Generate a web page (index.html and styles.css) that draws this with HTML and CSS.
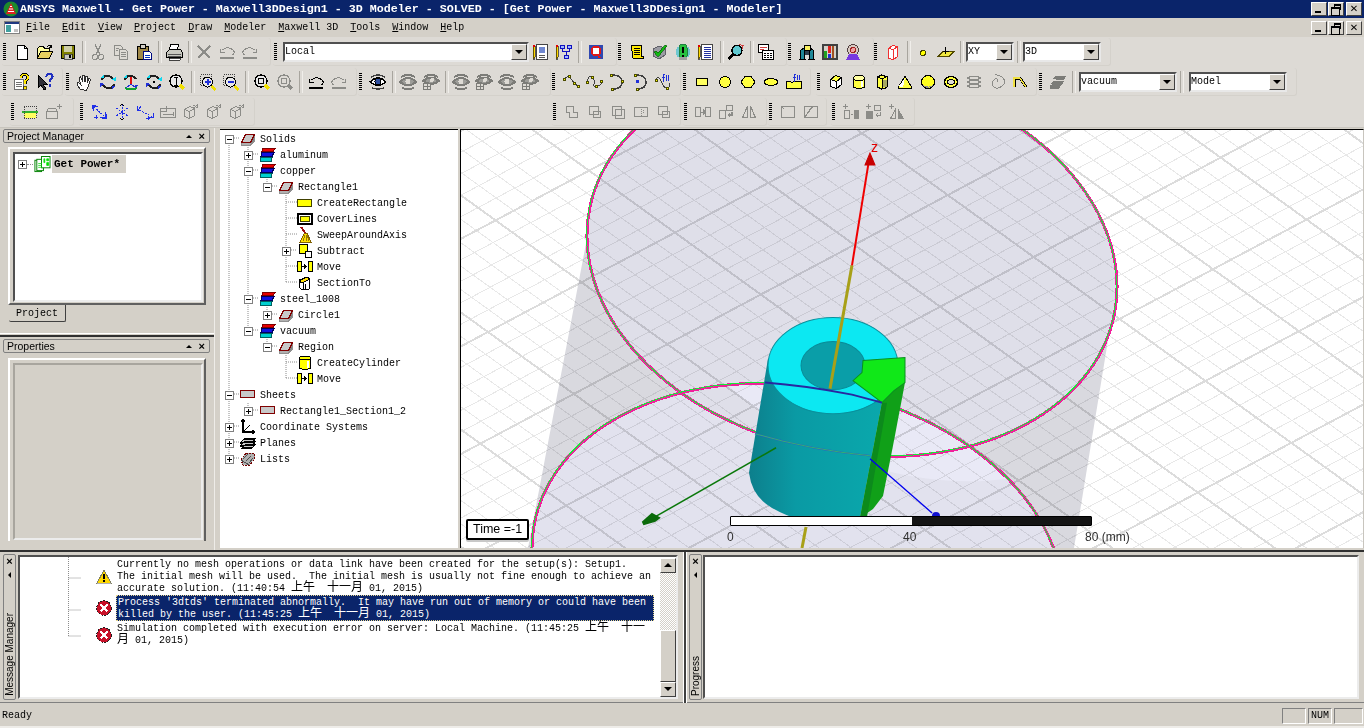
FILE: index.html
```html
<!DOCTYPE html>
<html lang="en">
<head>
<meta charset="utf-8">
<title>ANSYS Maxwell</title>
<link rel="stylesheet" href="styles.css">
</head>
<body>
<svg class="sprite" aria-hidden="true">
<!-- file toolbar -->
<symbol id="new" viewBox="0 0 18 18"><path d="M4.500 2.500h7l3 3v11h-10z" fill="#fff" stroke="#000"/><path d="M11.500 2.500v3h3" fill="none" stroke="#000"/></symbol>
<symbol id="open" viewBox="0 0 18 18"><path d="M1.500 15.500v-10l2-2h4l1 2h5v3" fill="#ffffa0" stroke="#000"/><path d="M1.500 15.500l3-7h12l-3 7z" fill="#e8d060" stroke="#000"/><path d="M10.500 4.500q2-3 5-1M15.500 1.500v3h-3" fill="none" stroke="#000"/></symbol>
<symbol id="save" viewBox="0 0 18 18"><rect x="2.500" y="2.500" width="13" height="13" fill="#808000" stroke="#000"/><rect x="5" y="3" width="8" height="6" fill="#cfcfa8"/><rect x="5" y="11" width="8" height="5" fill="#c8c8c0" stroke="#000" stroke-width=".6"/><rect x="10" y="12" width="2" height="3" fill="#000"/></symbol>
<symbol id="cut" viewBox="0 0 18 18"><g fill="none" stroke="#8c8c88"><path d="M6 1.500l5 10M12 1.500l-5 10"/><circle cx="6" cy="14" r="2.500"/><circle cx="12" cy="14" r="2.500"/></g></symbol>
<symbol id="copy" viewBox="0 0 18 18"><g fill="#dedbd5" stroke="#8c8c88"><path d="M2.500 2.500h6l2 2v8h-8z"/><path d="M7.500 6.500h6l2 2v8h-8z"/><path d="M9 9h5M9 11h5M9 13h5M4 5h3M4 7h2"/></g></symbol>
<symbol id="paste" viewBox="0 0 18 18"><rect x="2.500" y="3.500" width="11" height="13" fill="#a08848" stroke="#000"/><rect x="5.500" y="1.500" width="5" height="4" fill="#d4d0c8" stroke="#000"/><path d="M8.500 8.500h6l2 2v6h-8z" fill="#fff" stroke="#000a80"/><path d="M10 12h5M10 14h5" stroke="#0030c0"/></symbol>
<symbol id="print" viewBox="0 0 18 18"><path d="M5.500 1.500h8l-1 6h-8z" fill="#fff" stroke="#000"/><path d="M1.500 9.500l3-3h11l2 3v5h-16z" fill="#c8c8c0" stroke="#000"/><path d="M3 11h13M3 13h13" stroke="#555"/><path d="M4 15h11v2h-11z" fill="#fff" stroke="#000" stroke-width=".7"/></symbol>
<symbol id="del" viewBox="0 0 18 18"><path d="M3 3l12 12M15 3l-12 12" stroke="#8c8c88" stroke-width="2"/></symbol>
<symbol id="undog" viewBox="0 0 18 18"><g fill="none" stroke="#8c8c88"><path d="M4.500 7q4-4 9-1t1 6"/><path d="M2.500 5.500v4h4"/><path d="M2 14.500h14" stroke-width="2"/></g></symbol>
<symbol id="redog" viewBox="0 0 18 18"><g fill="none" stroke="#8c8c88"><path d="M13.500 7q-4-4-9-1t-1 6"/><path d="M15.500 5.500v4h-4"/><path d="M2 14.500h14" stroke-width="2"/></g></symbol>
<symbol id="undo" viewBox="0 0 18 18"><g fill="none" stroke="#000"><path d="M4.500 7q4-4 9-1t1 6"/><path d="M2.500 5.500v4h4"/><path d="M2 14.500h14" stroke-width="2"/></g></symbol>
<!-- project toolbar -->
<symbol id="pdoc" viewBox="0 0 18 18"><path d="M1 3h2v11l-1 3-1-3z" fill="#ffd800" stroke="#000" stroke-width=".6"/><path d="M1 2h2v1.500h-2z" fill="#e00000"/><rect x="4.500" y="1.500" width="11" height="15" fill="#fff" stroke="#444"/><rect x="7" y="4" width="6" height="6" fill="#7088d0"/><path d="M7 12h6M7 14h6" stroke="#555"/></symbol>
<symbol id="ptree" viewBox="0 0 18 18"><path d="M1 3h2v11l-1 3-1-3z" fill="#ffd800" stroke="#000" stroke-width=".6"/><path d="M1 2h2v1.500h-2z" fill="#e00000"/><g fill="#a0b8ff" stroke="#1010c0"><rect x="5.500" y="2.500" width="4" height="3"/><rect x="12.500" y="2.500" width="4" height="3"/><rect x="9.500" y="12.500" width="4" height="3"/></g><path d="M7.500 5.500v3h7v-3M11.500 8.500v4" fill="none" stroke="#1010c0"/></symbol>
<symbol id="qbox" viewBox="0 0 18 18"><rect x="2" y="2" width="14" height="14" fill="#3048b0"/><circle cx="9" cy="8" r="4.500" fill="#fff" stroke="#e01818" stroke-width="2"/><path d="M10 11l3 4" stroke="#e01818" stroke-width="2"/></symbol>
<symbol id="scroll" viewBox="0 0 18 18"><path d="M3.500 2.500h10v11h2v2h-10q-2-1-1-3z" fill="#ffe800" stroke="#000"/><path d="M6 5h6M6 7h6M6 9h6M6 11h6" stroke="#000"/></symbol>
<symbol id="check" viewBox="0 0 18 18"><path d="M2 6l6-3 6 2v7l-6 4-6-3z" fill="#9c9ca4" stroke="#606068"/><path d="M3 9l4 5 9-11-2-1-7 8-2-2z" fill="#14b814" stroke="#086008" stroke-width=".7"/></symbol>
<symbol id="valid" viewBox="0 0 18 18"><rect x="2" y="3" width="14" height="12" rx="5" fill="#70c8d0"/><rect x="5" y="1" width="8" height="16" rx="4" fill="#28c040" stroke="#208040"/><path d="M9 3.500v6.500" stroke="#000" stroke-width="2"/><circle cx="9" cy="13" r="1.300" fill="#000"/><rect x="5" y="14" width="8" height="3" fill="#a0a0a0"/></symbol>
<symbol id="plist" viewBox="0 0 18 18"><path d="M1 3h2v11l-1 3-1-3z" fill="#ffd800" stroke="#000" stroke-width=".6"/><path d="M1 2h2v1.500h-2z" fill="#e00000"/><rect x="4.500" y="1.500" width="11" height="15" fill="#fff" stroke="#444"/><path d="M7 4h7M7 6h7M7 8h7M7 10h7M7 12h7M7 14h7" stroke="#2030a0"/></symbol>
<symbol id="mag" viewBox="0 0 18 18"><circle cx="10" cy="7.500" r="5" fill="#60c8d0" stroke="#000" stroke-width="1.400"/><path d="M6.500 11l-5 5" stroke="#000" stroke-width="2.400"/><path d="M12 1.500l4 1-1 3" fill="none" stroke="#d04040"/></symbol>
<symbol id="table" viewBox="0 0 18 18"><rect x="1.500" y="1.500" width="10" height="8" fill="#fff" stroke="#000"/><path d="M3 4h7M3 6h4" stroke="#d04040"/><rect x="5.500" y="7.500" width="11" height="9" fill="#fff" stroke="#000"/><path d="M7 10h8M7 12h8M7 14h8" stroke="#000" stroke-dasharray="2 1"/></symbol>
<symbol id="binoc" viewBox="0 0 18 18"><path d="M2 16l1-9 3-2 1 11z" fill="#208898" stroke="#000"/><path d="M11 16l1-11 3 2 1 9z" fill="#208898" stroke="#000"/><path d="M6 2h6v5h-6z" fill="#f8f060" stroke="#000"/><path d="M7 8h4v4h-4z" fill="#304050"/></symbol>
<symbol id="bars" viewBox="0 0 18 18"><rect x="2" y="2" width="14" height="14" fill="#d4d0c8" stroke="#404040" stroke-width="2"/><rect x="3" y="8" width="3" height="7" fill="#20a020"/><rect x="7" y="3" width="3" height="7" fill="#e02020"/><rect x="7" y="11" width="3" height="4" fill="#2030d0"/><rect x="11" y="3" width="2" height="12" fill="#a05020"/></symbol>
<symbol id="target" viewBox="0 0 18 18"><circle cx="9" cy="7" r="5.500" fill="#d8c8c0" stroke="#504040"/><circle cx="9" cy="7" r="2.500" fill="#f0a0a0" stroke="#a02020"/><path d="M2 17l3-6h8l3 6z" fill="#7838e0"/></symbol>
<symbol id="redbox" viewBox="0 0 18 18"><path d="M4.500 5.500l4-3 5 1v10l-4 3-5-1z" fill="#fff" stroke="#f03030"/><path d="M4.500 5.500l5 1 4-3M9.500 6.500v10" fill="none" stroke="#f03030"/></symbol>
<symbol id="pt" viewBox="0 0 18 18"><circle cx="9" cy="10" r="2.500" fill="#ffff00" stroke="#404000"/></symbol>
<symbol id="plane" viewBox="0 0 18 18"><path d="M1 13.500l5-5h11l-5 5z" fill="#f0e840" stroke="#504800"/><path d="M8.500 4v7M5.500 8h6" stroke="#000"/></symbol>
<!-- view toolbar -->
<symbol id="help" viewBox="0 0 18 18"><path d="M1.500 6.500h9v10h-9z" fill="#fff" stroke="#707070"/><path d="M3 9h6M3 11h6M3 13h6" stroke="#707070"/><path d="M8 5q0-3.500 3.500-3.500t3.500 3q0 2-3 3.500v3" fill="none" stroke="#000" stroke-width="3"/><path d="M8 5q0-3.500 3.500-3.500t3.500 3q0 2-3 3.500v3" fill="none" stroke="#ffe800" stroke-width="1.600"/><rect x="10.500" y="13" width="3" height="3" fill="#ffe800" stroke="#000" stroke-width=".6"/></symbol>
<symbol id="ahelp" viewBox="0 0 18 18"><path d="M2 2v13l3-3 3 5 2-1-3-5h4z" fill="#303038" stroke="#000"/><path d="M10 4q1-3 3.500-3t3 2.500q0 2-3 3.500v2" fill="none" stroke="#2030c0" stroke-width="2"/><rect x="12.500" y="11" width="2.500" height="2.500" fill="#2030c0"/></symbol>
<symbol id="hand" viewBox="0 0 18 18"><path d="M4 16q-3-4-3-6l1-1 3 3-2-7 1.500-1 2.500 5-1-7h2l1 7 1-6 1.500 .5-.5 6 2-4 1.500 1-2 6-2 5z" fill="#fff" stroke="#303030"/></symbol>
<symbol id="rot" viewBox="0 0 18 18"><path d="M3 7q1-5 7-4 3 .5 4 3M15 11q-1 5-7 4-3-.5-4-3" fill="none" stroke="#202020" stroke-width="2"/><path d="M12 7l5-3v4z" fill="#10d8f0"/><path d="M6 11l-5 3v-4z" fill="#2030d8"/><path d="M17 13l-4 3v-3z" fill="#2030d8"/><path d="M1 5l4-3v3z" fill="#10d8f0"/></symbol>
<symbol id="rot2" viewBox="0 0 18 18"><path d="M3 7q1-5 7-4 3 .5 4 3" fill="none" stroke="#202020" stroke-width="2"/><path d="M3 15q6 3 12 0" fill="none" stroke="#10a030" stroke-width="2"/><path d="M9 4v7" stroke="#e01010" stroke-width="1.500"/><path d="M9 11l-5 4M9 11l5 4" stroke="#2030d8"/><path d="M1 5l4-3v3z" fill="#10d8f0"/><path d="M17 12l-4 3v-3z" fill="#2030d8"/></symbol>
<symbol id="rot3" viewBox="0 0 18 18"><use href="#rot"/><circle cx="9" cy="9" r="1.500" fill="#000"/></symbol>
<symbol id="fit" viewBox="0 0 18 18"><circle cx="8" cy="8" r="6" fill="#e8e8e8" stroke="#000" stroke-width="1.300"/><path d="M8 4v8M6 4h4M6 12h4" stroke="#000"/><path d="M12 12l4 4" stroke="#f0e000" stroke-width="3"/></symbol>
<symbol id="zin" viewBox="0 0 18 18"><rect x="1.500" y="1.500" width="11" height="11" fill="none" stroke="#404040" stroke-dasharray="1 1"/><circle cx="8.500" cy="9" r="5" fill="#e8e8e8" stroke="#000"/><path d="M8.500 6v6M5.500 9h6" stroke="#2030d8" stroke-width="2"/><path d="M12.500 13l4 4" stroke="#f0e000" stroke-width="2.500"/></symbol>
<symbol id="zout" viewBox="0 0 18 18"><rect x="1.500" y="1.500" width="11" height="11" fill="none" stroke="#404040" stroke-dasharray="1 1"/><circle cx="8.500" cy="9" r="5" fill="#e8e8e8" stroke="#000"/><path d="M5.500 9h6" stroke="#2030d8" stroke-width="2"/><path d="M12.500 13l4 4" stroke="#f0e000" stroke-width="2.500"/></symbol>
<symbol id="zall" viewBox="0 0 18 18"><circle cx="8" cy="8" r="6" fill="#e8e8e8" stroke="#000" stroke-width="1.300"/><rect x="5.500" y="5.500" width="5" height="5" fill="none" stroke="#000"/><path d="M12 12l4 4" stroke="#f0e000" stroke-width="3"/></symbol>
<symbol id="zsel" viewBox="0 0 18 18"><circle cx="8" cy="8" r="6" fill="none" stroke="#8c8c88" stroke-width="1.300"/><rect x="5.500" y="5.500" width="5" height="5" fill="none" stroke="#8c8c88"/><path d="M12 12l4 4" stroke="#8c8c88" stroke-width="3"/></symbol>
<symbol id="eye" viewBox="0 0 18 18"><path d="M1 9q8-8 16 0-8 7-16 0z" fill="#fff" stroke="#000" stroke-width="1.400"/><circle cx="9" cy="8.500" r="3" fill="#3050a0" stroke="#000"/><path d="M2 4q7-4 14 0M3 15q6 2 12 0" fill="none" stroke="#404040" stroke-width="1.400"/></symbol>
<symbol id="eyeg" viewBox="0 0 18 18"><path d="M1 9q8-8 16 0-8 7-16 0z" fill="#9c9c98" stroke="#7c7c78" stroke-width="2"/><circle cx="9" cy="8.500" r="2.500" fill="#dedbd5"/><path d="M2 4q7-4 14 0M3 15q6 2 12 0" fill="none" stroke="#7c7c78" stroke-width="2"/></symbol>
<symbol id="eyeb" viewBox="0 0 18 18"><path d="M1 8q8-7 16 0-8 6-16 0z" fill="#9c9c98" stroke="#7c7c78" stroke-width="2"/><circle cx="10" cy="7" r="2" fill="#dedbd5"/><path d="M2 4q7-4 14 0" fill="none" stroke="#7c7c78" stroke-width="2"/><rect x="1.500" y="10.500" width="7" height="6" fill="#dedbd5" stroke="#7c7c78"/><path d="M5 10v6M2 13h6" stroke="#7c7c78"/></symbol>
<!-- draw toolbar -->
<symbol id="pline" viewBox="0 0 18 18"><path d="M2 6l5-3 5 7 4 3" fill="none" stroke="#404040"/><g fill="#ffff00" stroke="#000" stroke-width=".7"><rect x="1" y="5" width="2.500" height="2.500"/><rect x="6" y="2" width="2.500" height="2.500"/><rect x="11" y="9" width="2.500" height="2.500"/><rect x="15" y="12" width="2.500" height="2.500"/></g></symbol>
<symbol id="spl" viewBox="0 0 18 18"><path d="M2 9q2-8 5-5t2 7 4 2 3-5" fill="none" stroke="#404040"/><g fill="#ffff00" stroke="#000" stroke-width=".7"><rect x="1" y="8" width="2.500" height="2.500"/><rect x="6" y="3" width="2.500" height="2.500"/><rect x="10" y="12" width="2.500" height="2.500"/><rect x="15" y="7" width="2.500" height="2.500"/></g></symbol>
<symbol id="arc" viewBox="0 0 18 18"><path d="M4 2q10 0 10 7t-9 7" fill="none" stroke="#404040" stroke-width="1.600"/><g fill="#ffff00" stroke="#000" stroke-width=".7"><rect x="2" y="1" width="2.500" height="2.500"/><rect x="13" y="7" width="2.500" height="2.500"/><rect x="3" y="15" width="2.500" height="2.500"/></g></symbol>
<symbol id="arc2" viewBox="0 0 18 18"><path d="M5 2q10 0 10 7t-9 7" fill="none" stroke="#404040" stroke-width="1.600"/><rect x="3" y="1" width="2.500" height="2.500" fill="#ffff00" stroke="#000" stroke-width=".7"/><rect x="5" y="15" width="2.500" height="2.500" fill="#ffff00" stroke="#000" stroke-width=".7"/><rect x="5" y="7" width="2.500" height="2.500" fill="#2030d8"/></symbol>
<symbol id="eqc" viewBox="0 0 18 18"><path d="M1 7q3-4 5-1t3 6 4 3 2-5" fill="none" stroke="#404040"/><rect x="1" y="6" width="2.500" height="2.500" fill="#ffff00" stroke="#000" stroke-width=".7"/><rect x="12" y="14" width="2.500" height="2.500" fill="#ffff00" stroke="#000" stroke-width=".7"/><path d="M11 1q-2 0-1.500 4t0 4M8 4h3M12 2q1.500 3 0 6M15 2q-1.500 3 0 6" fill="none" stroke="#2030d8"/></symbol>
<symbol id="rect" viewBox="0 0 18 18"><rect x="3.500" y="5.500" width="11" height="7" fill="#ffff60" stroke="#000"/></symbol>
<symbol id="circ" viewBox="0 0 18 18"><circle cx="9" cy="9" r="5.500" fill="#ffff40" stroke="#000"/></symbol>
<symbol id="hexa" viewBox="0 0 18 18"><path d="M6 3.500h6l4 5.500-4 5.500h-6l-4-5.500z" fill="#ffff40" stroke="#000"/></symbol>
<symbol id="elli" viewBox="0 0 18 18"><ellipse cx="9" cy="9" rx="7" ry="3.500" fill="#ffff40" stroke="#000"/></symbol>
<symbol id="eqs" viewBox="0 0 18 18"><path d="M1.500 8.500h4q1 2 3 0h8v7h-15z" fill="#ffff40" stroke="#000"/><path d="M11 1q-2 0-1.500 4t0 3M8 4h3M12 2q1.500 3 0 5M15 2q-1.500 3 0 5" fill="none" stroke="#2030d8"/></symbol>
<symbol id="box" viewBox="0 0 18 18"><path d="M3.500 6.500l5-4 6 2v7l-5 4-6-2z" fill="#fff" stroke="#000"/><path d="M3.500 6.500l6 2 5-4-6-2z" fill="#ffff40" stroke="#000"/><path d="M9.500 8.500v7" stroke="#000"/></symbol>
<symbol id="cyl" viewBox="0 0 18 18"><path d="M3.500 5v9q5.500 3 11 0v-9z" fill="#ffff40" stroke="#000"/><ellipse cx="9" cy="5" rx="5.500" ry="2.500" fill="#ffffa0" stroke="#000"/><rect x="11" y="8" width="2" height="6" fill="#fff"/></symbol>
<symbol id="prism" viewBox="0 0 18 18"><path d="M4.500 4v10l4 2 4-1 2-2v-9l-6-2z" fill="#ffff40" stroke="#000"/><path d="M4.500 4l5 2 5-3" fill="none" stroke="#000"/><path d="M9.500 6v10" stroke="#000"/><rect x="10" y="7" width="4" height="7" fill="#a8a860"/></symbol>
<symbol id="cone" viewBox="0 0 18 18"><path d="M9 3l7 12q-7 2-14 0z" fill="#ffff40" stroke="#000"/><path d="M9 5l-2 9q-3 0-4-1z" fill="#fff"/></symbol>
<symbol id="sph" viewBox="0 0 18 18"><circle cx="9" cy="9" r="6.500" fill="#ffff20" stroke="#000"/><path d="M3 12q4 5 11 1l1-3q-2 6-12 2z" fill="#909090"/></symbol>
<symbol id="tor" viewBox="0 0 18 18"><ellipse cx="9" cy="9" rx="6.500" ry="5.500" fill="#ffff40" stroke="#000" stroke-width="1.400"/><ellipse cx="9" cy="9" rx="3.500" ry="2.500" fill="#dedbd5" stroke="#000"/></symbol>
<symbol id="hel" viewBox="0 0 18 18"><g fill="none" stroke="#8c8c88" stroke-width="1.500"><ellipse cx="9" cy="5" rx="6" ry="1.500"/><ellipse cx="9" cy="9" rx="6" ry="1.500"/><ellipse cx="9" cy="13" rx="6" ry="1.500"/></g></symbol>
<symbol id="spi" viewBox="0 0 18 18"><path d="M9 9q2-2 0-3t-4 2 1 6 8-1 1-8-8-3" fill="none" stroke="#8c8c88"/></symbol>
<symbol id="bond" viewBox="0 0 18 18"><path d="M3 14v-9h6l6 9" fill="none" stroke="#000" stroke-width="3"/><path d="M3 14v-9h6l6 9" fill="none" stroke="#f0e040" stroke-width="1.400"/></symbol>
<symbol id="stack" viewBox="0 0 18 18"><path d="M3 6l3-3h11l-2 4h-5zM1 11l3-3h11l-2 4h-8zM1 12h11l-2 4h-9z" fill="#7c7c78"/></symbol>
<!-- bottom toolbar -->
<symbol id="cs" viewBox="0 0 18 18"><rect x="3" y="9" width="12" height="6" fill="#ffff60"/><path d="M1 9h16" stroke="#30b030" stroke-width="1.400"/><path d="M3 9v-6h12v6M3 15h12M3 15v-6M15 15v-6" fill="none" stroke="#404040" stroke-dasharray="1 1"/></symbol>
<symbol id="csadd" viewBox="0 0 18 18"><path d="M2.500 8.500h11v7h-11zM2.500 8.500l2-3h7l2 3" fill="none" stroke="#8c8c88"/><path d="M15 1v5M12.500 3.500h5" stroke="#8c8c88"/></symbol>
<symbol id="ax1" viewBox="0 0 18 18"><path d="M4 4l10 9" stroke="#2030e8" stroke-dasharray="2 1" fill="none"/><path d="M2 6V2h4M3 2v6M2 3h6M16 11v4h-4M15 15v-6M16 14h-6M6 12v4M4 14h4" fill="none" stroke="#2030e8"/></symbol>
<symbol id="ax2" viewBox="0 0 18 18"><path d="M9 1v16M3 5l12 8M15 5L3 13" stroke="#2030e8" fill="none" stroke-dasharray="2 1"/><path d="M7 3l2-2 2 2M7 15l2 2 2-2" fill="none" stroke="#000"/></symbol>
<symbol id="ax3" viewBox="0 0 18 18"><path d="M1 6l16 8" stroke="#2030e8" stroke-dasharray="2 1" fill="none"/><path d="M1 3v4h4M3 6l2-3M17 10v4h-4M10 15h4M12 13v4" fill="none" stroke="#2030e8"/></symbol>
<symbol id="ax4" viewBox="0 0 18 18"><g fill="none" stroke="#8c8c88"><rect x="1.500" y="5.500" width="15" height="9"/><path d="M7.500 2.500v6h-6M4 11h10M14 9v4"/></g></symbol>
<symbol id="ax5" viewBox="0 0 18 18"><g fill="none" stroke="#8c8c88"><path d="M2.500 6.500l5-3 5 2v7l-5 3-5-2zM2.500 6.500l5 2 5-3M7.500 8.500v7"/><path d="M11 2l5 3M16 2l-5 3M15 1v3"/></g></symbol>
<symbol id="b1" viewBox="0 0 18 18"><path d="M3.500 3.500h7v6h4v5h-8v-5h-3z" fill="none" stroke="#8c8c88" stroke-width="1.300"/></symbol>
<symbol id="b2" viewBox="0 0 18 18"><g fill="none" stroke="#8c8c88" stroke-width="1.300"><rect x="3.500" y="3.500" width="9" height="8"/><rect x="7.500" y="8.500" width="7" height="6"/></g></symbol>
<symbol id="b3" viewBox="0 0 18 18"><g fill="none" stroke="#8c8c88" stroke-width="1.300"><rect x="3.500" y="3.500" width="9" height="9"/><rect x="6.500" y="6.500" width="9" height="9"/></g></symbol>
<symbol id="b4" viewBox="0 0 18 18"><rect x="2.500" y="4.500" width="13" height="9" fill="none" stroke="#8c8c88" stroke-width="1.300"/><path d="M9 4v10M11 7v4" stroke="#8c8c88" stroke-dasharray="1 1"/></symbol>
<symbol id="b6" viewBox="0 0 18 18"><g fill="none" stroke="#8c8c88" stroke-width="1.300"><rect x="1.500" y="4.500" width="5" height="9"/><rect x="11.500" y="4.500" width="5" height="9"/></g><path d="M7 9h3" stroke="#8c8c88"/><path d="M9 6v6l3-3z" fill="#8c8c88"/></symbol>
<symbol id="b7" viewBox="0 0 18 18"><g fill="none" stroke="#8c8c88" stroke-width="1.300"><rect x="2.500" y="7.500" width="6" height="8"/><rect x="9.500" y="2.500" width="6" height="5"/><path d="M15 9v3h-4M13 10l-2 2 2 2"/></g></symbol>
<symbol id="b8" viewBox="0 0 18 18"><g fill="none" stroke="#8c8c88" stroke-width="1.200"><path d="M7.500 3.500v11h-5zM10.500 3.500v11h5z"/></g></symbol>
<symbol id="b9" viewBox="0 0 18 18"><g fill="none" stroke="#8c8c88" stroke-width="1.300"><rect x="2.500" y="3.500" width="13" height="11"/><path d="M2.500 3.500l3 3"/></g></symbol>
<symbol id="b10" viewBox="0 0 18 18"><g fill="none" stroke="#8c8c88" stroke-width="1.300"><rect x="2.500" y="3.500" width="13" height="11"/><path d="M2.500 14.500l8-11"/></g></symbol>
<symbol id="b11" viewBox="0 0 18 18"><path d="M3 1v5M.5 3.500h5M2.500 7.500h5v8h-5z" fill="none" stroke="#8c8c88"/><path d="M9 11h2" stroke="#8c8c88"/><rect x="11.500" y="7" width="5" height="9" fill="#8c8c88"/></symbol>
<symbol id="b12" viewBox="0 0 18 18"><path d="M3 1v5M.5 3.500h5" stroke="#8c8c88"/><rect x="1" y="8" width="7" height="8" fill="#8c8c88"/><g fill="none" stroke="#8c8c88"><rect x="9.500" y="2.500" width="6" height="5"/><path d="M15 9v3h-4M13 10l-2 2 2 2"/></g></symbol>
<symbol id="b13" viewBox="0 0 18 18"><path d="M3 1v5M.5 3.500h5" stroke="#8c8c88"/><path d="M7.500 6.500v9h-5z" fill="none" stroke="#8c8c88"/><path d="M10 5v11h6z" fill="#8c8c88"/></symbol>
<!-- tree -->
<symbol id="tproj" viewBox="0 0 18 18"><g fill="#fff" stroke="#008000"><rect x="1.500" y="4.500" width="7" height="12"/><rect x="3.500" y="3.500" width="7" height="12"/><rect x="8.500" y=".5" width="9" height="12"/></g><path d="M5 8h4M5 10h4M5 12h4M11 3h1v4h-1zM14 3h2v2h-2zM14 7h2v3h-2z" fill="#00e000" stroke="#00e000" stroke-width=".8"/></symbol>
<symbol id="tsolid" viewBox="0 0 16 16"><path d="M1.500 11.500l4-8h9l-4 8z" fill="#c8c8c8" stroke="#800000"/><path d="M1.500 11.500h9v3h-9z" fill="#b0b0b0" stroke="none"/><path d="M10.500 14.500l4-4v-7l-4 8z" fill="#808080"/><path d="M1.500 11.500v2.500h9l4-4v-6.500l-4 8z" fill="none" stroke="#909090"/><path d="M1.500 11.500l4-8h9l-4 8z" fill="none" stroke="#800000"/></symbol>
<symbol id="tmat" viewBox="0 0 17 16"><path d="M4 1.500h12l-2 3h-11z" fill="#e80000" stroke="#800000"/><path d="M3 5.500h12l-2 4h-11z" fill="#1010e0" stroke="#000060"/><path d="M1 10.500h12l-1 4h-11z" fill="#00d0d0" stroke="#006060"/></symbol>
<symbol id="trect" viewBox="0 0 16 16"><rect x=".5" y="4.500" width="14" height="7" fill="#ffff00" stroke="#404000"/></symbol>
<symbol id="tcover" viewBox="0 0 16 16"><rect x="1" y="3" width="14" height="10" fill="#fff" stroke="#000" stroke-width="2"/><rect x="3.500" y="5.500" width="9" height="5" fill="#ffff00" stroke="#404000"/></symbol>
<symbol id="tsweep" viewBox="0 0 16 16"><path d="M4 0l5 7" stroke="#a01010" stroke-width="2"/><path d="M3 15l4-8 3-1 4 9z" fill="#ffe000" stroke="#806000"/><path d="M6 14l2-6M9 14l0-6M12 14l-2-6" stroke="#806000" stroke-width=".8"/></symbol>
<symbol id="tsub" viewBox="0 0 16 16"><rect x="2.500" y="1.500" width="8" height="9" fill="#ffff00" stroke="#000"/><rect x="8" y="8" width="6" height="6" fill="#fff" stroke="#000"/></symbol>
<symbol id="tmove" viewBox="0 0 16 16"><g fill="#ffff00" stroke="#000"><rect x=".5" y="2.500" width="4" height="10"/><rect x="11.500" y="2.500" width="4" height="10"/></g><path d="M5 7.500h3" stroke="#000"/><path d="M7 4.500v6l3-3z" fill="#000"/></symbol>
<symbol id="tsect" viewBox="0 0 16 16"><path d="M2 5l8-3 3 3-1 9-7 1-3-3z" fill="#fff" stroke="#000"/><path d="M2 6l8-4 3 2-8 4z" fill="#ffe000" stroke="#000"/><path d="M6 8v7M9 9l-1 5" stroke="#000"/></symbol>
<symbol id="tcyl" viewBox="0 0 16 16"><path d="M2.500 3v10q5.500 3 11 0v-10z" fill="#ffff00" stroke="#000" stroke-width="1.200"/><ellipse cx="8" cy="3" rx="5.500" ry="2" fill="#ffff00" stroke="#000"/><rect x="10" y="6" width="2" height="7" fill="#fff"/></symbol>
<symbol id="tsheet" viewBox="0 0 16 16"><rect x=".5" y="3.500" width="14" height="7" fill="#c8c8c8" stroke="#800000"/></symbol>
<symbol id="tcs" viewBox="0 0 16 16"><path d="M3 0v13h12M3 13l7-7" fill="none" stroke="#000" stroke-width="1.200"/><path d="M1 3l2-3 2 3M12 11l3 2-3 2" fill="none" stroke="#000"/></symbol>
<symbol id="tplanes" viewBox="0 0 16 16"><g fill="#c8c8c8" stroke="#000" stroke-width="1.200"><path d="M0 8l4-4h11l-3 4z"/><path d="M0 11l4-4h11l-3 4z"/><path d="M2 13l3-3h10l-3 3z"/></g></symbol>
<symbol id="tlists" viewBox="0 0 16 16"><path d="M1 9l5-7h8l1 5-5 7h-7z" fill="#b0b0b0" stroke="#700000" stroke-dasharray="2 1"/><path d="M3 8l5-5M6 10l5-5M9 12l4-5M1 9l8 5" stroke="#505050" fill="none"/></symbol>
<symbol id="warn" viewBox="0 0 16 16"><path d="M8 1l7 13h-14z" fill="#ffd800" stroke="#808060"/><path d="M8 5v5" stroke="#000" stroke-width="2"/><rect x="7" y="11" width="2" height="2"/><rect x="1" y="14" width="14" height="1" fill="#b0b0b0"/></symbol>
<symbol id="err" viewBox="0 0 16 16"><circle cx="8" cy="8" r="7.300" fill="#c81028" stroke="#202020" stroke-dasharray="2 1"/><path d="M4.500 4.500l7 7M11.500 4.500l-7 7" stroke="#fff" stroke-width="2.400"/></symbol>
</svg>

<div class="app">
  <header class="title">
    <svg class="logo" viewBox="0 0 16 16"><circle cx="8" cy="8" r="7.500" fill="#1e8a2c"/><path d="M8 2L3 13h10z" fill="#e02020"/><path d="M6 8h4M5 10.500h6M7 5.500h2" stroke="#fff"/></svg>
    <span class="title-text">ANSYS Maxwell - Get Power - Maxwell3DDesign1 - 3D Modeler - SOLVED - [Get Power - Maxwell3DDesign1 - Modeler]</span>
    <div class="wins">
      <span class="wb"><i class="w-min"></i></span><span class="wb"><i class="w-res"></i></span><span class="wb wb-x">✕</span>
    </div>
  </header>

  <nav class="menu">
    <svg class="mdi" viewBox="0 0 16 14"><rect x=".5" y=".5" width="15" height="12" fill="#fff" stroke="#808080"/><rect x="1" y="1" width="14" height="2" fill="#203880"/><rect x="2" y="4" width="5" height="7" fill="#40a0a0"/><rect x="10" y="8" width="4" height="3" fill="#c0c0c0"/></svg>
    <span class="mi"><u>F</u>ile</span><span class="mi"><u>E</u>dit</span><span class="mi"><u>V</u>iew</span><span class="mi"><u>P</u>roject</span><span class="mi"><u>D</u>raw</span><span class="mi"><u>M</u>odeler</span><span class="mi"><u>M</u>axwell 3D</span><span class="mi"><u>T</u>ools</span><span class="mi"><u>W</u>indow</span><span class="mi"><u>H</u>elp</span>
    <div class="wins">
      <span class="wb"><i class="w-min"></i></span><span class="wb"><i class="w-res"></i></span><span class="wb wb-x">✕</span>
    </div>
  </nav>

  <section class="bars-area">
    <div class="row r1">
      <div class="g"><i class="grip"></i>
        <span class="b"><svg class="i"><use href="#new"/></svg></span><span class="b"><svg class="i"><use href="#open"/></svg></span><span class="b"><svg class="i"><use href="#save"/></svg></span><i class="s"></i>
        <span class="b"><svg class="i"><use href="#cut"/></svg></span><span class="b"><svg class="i"><use href="#copy"/></svg></span><span class="b"><svg class="i"><use href="#paste"/></svg></span><i class="s"></i>
        <span class="b"><svg class="i"><use href="#print"/></svg></span><i class="s"></i>
        <span class="b"><svg class="i"><use href="#del"/></svg></span><span class="b"><svg class="i"><use href="#undog"/></svg></span><span class="b"><svg class="i"><use href="#redog"/></svg></span>
      </div>
      <div class="g"><i class="grip"></i>
        <span class="combo c-local"><span class="cv">Local</span><i class="cb"></i></span>
        <span class="b"><svg class="i"><use href="#pdoc"/></svg></span><span class="b"><svg class="i"><use href="#ptree"/></svg></span><i class="s s9"></i>
        <span class="b"><svg class="i"><use href="#qbox"/></svg></span>
      </div>
      <div class="g ml-n2"><i class="grip"></i>
        <span class="b"><svg class="i"><use href="#scroll"/></svg></span><span class="b"><svg class="i"><use href="#check"/></svg></span><span class="b"><svg class="i"><use href="#valid"/></svg></span><span class="b"><svg class="i"><use href="#plist"/></svg></span><i class="s"></i>
        <span class="b"><svg class="i"><use href="#mag"/></svg></span><i class="s"></i>
        <span class="b"><svg class="i"><use href="#table"/></svg></span>
      </div>
      <div class="g ml-n2"><i class="grip"></i>
        <span class="b"><svg class="i"><use href="#binoc"/></svg></span><span class="b"><svg class="i"><use href="#bars"/></svg></span><span class="b"><svg class="i"><use href="#target"/></svg></span>
      </div>
      <div class="g ml-n3"><i class="grip"></i>
        <span class="b"><svg class="i"><use href="#redbox"/></svg></span><i class="s"></i>
        <span class="b"><svg class="i"><use href="#pt"/></svg></span><span class="b"><svg class="i"><use href="#plane"/></svg></span><i class="s s9"></i>
        <span class="combo c-xy"><span class="cv">XY</span><i class="cb"></i></span><i class="s s9"></i>
        <span class="combo c-3d"><span class="cv">3D</span><i class="cb"></i></span>
      </div>
    </div>

    <div class="row r2">
      <div class="g pr6"><i class="grip"></i>
        <span class="b"><svg class="i"><use href="#help"/></svg></span><span class="b"><svg class="i"><use href="#ahelp"/></svg></span>
      </div>
      <div class="g pr6"><i class="grip"></i>
        <span class="b"><svg class="i"><use href="#hand"/></svg></span><span class="b"><svg class="i"><use href="#rot"/></svg></span><span class="b"><svg class="i"><use href="#rot2"/></svg></span><span class="b"><svg class="i"><use href="#rot3"/></svg></span><span class="b"><svg class="i"><use href="#fit"/></svg></span><i class="s"></i>
        <span class="b"><svg class="i"><use href="#zin"/></svg></span><span class="b"><svg class="i"><use href="#zout"/></svg></span><i class="s"></i>
        <span class="b"><svg class="i"><use href="#zall"/></svg></span><span class="b"><svg class="i"><use href="#zsel"/></svg></span><i class="s"></i>
        <span class="b"><svg class="i"><use href="#undo"/></svg></span><span class="b"><svg class="i"><use href="#redog"/></svg></span>
      </div>
      <div class="g ml-n1"><i class="grip"></i>
        <span class="b"><svg class="i"><use href="#eye"/></svg></span><i class="s s7"></i>
        <span class="b"><svg class="i"><use href="#eyeg"/></svg></span><span class="b"><svg class="i"><use href="#eyeb"/></svg></span><i class="s s7"></i>
        <span class="b"><svg class="i"><use href="#eyeg"/></svg></span><span class="b"><svg class="i"><use href="#eyeb"/></svg></span><span class="b"><svg class="i"><use href="#eyeg"/></svg></span><span class="b"><svg class="i"><use href="#eyeb"/></svg></span>
      </div>
      <div class="g ml-n2 pr6"><i class="grip"></i>
        <span class="b"><svg class="i"><use href="#pline"/></svg></span><span class="b"><svg class="i"><use href="#spl"/></svg></span><span class="b"><svg class="i"><use href="#arc"/></svg></span><span class="b"><svg class="i"><use href="#arc2"/></svg></span><span class="b"><svg class="i"><use href="#eqc"/></svg></span>
      </div>
      <div class="g ml-n1 pr5"><i class="grip"></i>
        <span class="b"><svg class="i"><use href="#rect"/></svg></span><span class="b"><svg class="i"><use href="#circ"/></svg></span><span class="b"><svg class="i"><use href="#hexa"/></svg></span><span class="b"><svg class="i"><use href="#elli"/></svg></span><span class="b"><svg class="i"><use href="#eqs"/></svg></span>
      </div>
      <div class="g ml3 pr5"><i class="grip"></i>
        <span class="b"><svg class="i"><use href="#box"/></svg></span><span class="b"><svg class="i"><use href="#cyl"/></svg></span><span class="b"><svg class="i"><use href="#prism"/></svg></span><span class="b"><svg class="i"><use href="#cone"/></svg></span><span class="b"><svg class="i"><use href="#sph"/></svg></span><span class="b"><svg class="i"><use href="#tor"/></svg></span><span class="b"><svg class="i"><use href="#hel"/></svg></span><span class="b"><svg class="i"><use href="#spi"/></svg></span><span class="b"><svg class="i"><use href="#bond"/></svg></span>
      </div>
      <div class="g ml-n1"><i class="grip"></i>
        <span class="b"><svg class="i"><use href="#stack"/></svg></span><i class="s s10"></i>
        <span class="combo c-mat"><span class="cv">vacuum</span><i class="cb"></i></span><i class="s s12"></i>
        <span class="combo c-mat"><span class="cv">Model</span><i class="cb"></i></span>
      </div>
    </div>

    <div class="row r3">
      <div class="g ml8"><i class="grip"></i>
        <span class="b"><svg class="i"><use href="#cs"/></svg></span><span class="b"><svg class="i"><use href="#csadd"/></svg></span>
      </div>
      <div class="g ml3 pr6"><i class="grip"></i>
        <span class="b"><svg class="i"><use href="#ax1"/></svg></span><span class="b"><svg class="i"><use href="#ax2"/></svg></span><span class="b"><svg class="i"><use href="#ax3"/></svg></span><span class="b"><svg class="i"><use href="#ax4"/></svg></span><span class="b"><svg class="i"><use href="#ax5"/></svg></span><span class="b"><svg class="i"><use href="#ax5"/></svg></span><span class="b"><svg class="i"><use href="#ax5"/></svg></span>
      </div>
      <div class="g ml-far pr5"><i class="grip"></i>
        <span class="b"><svg class="i"><use href="#b1"/></svg></span><span class="b"><svg class="i"><use href="#b2"/></svg></span><span class="b"><svg class="i"><use href="#b3"/></svg></span><span class="b"><svg class="i"><use href="#b4"/></svg></span><span class="b"><svg class="i"><use href="#b2"/></svg></span>
      </div>
      <div class="g pr6"><i class="grip"></i>
        <span class="b"><svg class="i"><use href="#b6"/></svg></span><span class="b"><svg class="i"><use href="#b7"/></svg></span><span class="b"><svg class="i"><use href="#b8"/></svg></span>
      </div>
      <div class="g ml-n1 pr4"><i class="grip"></i>
        <span class="b"><svg class="i"><use href="#b9"/></svg></span><span class="b"><svg class="i"><use href="#b10"/></svg></span>
      </div>
      <div class="g ml2 pr6"><i class="grip"></i>
        <span class="b"><svg class="i"><use href="#b11"/></svg></span><span class="b"><svg class="i"><use href="#b12"/></svg></span><span class="b"><svg class="i"><use href="#b13"/></svg></span>
      </div>
    </div>
  </section>

  <main class="main">
    <aside class="left">
      <div class="ph"><span>Project Manager</span><span class="ph-btns"><i class="up"></i><b>×</b></span></div>
      <div class="sunk pm">
        <div class="inner">
          <div class="proj"><i class="tg plus"></i><i class="dots"></i><svg class="pi"><use href="#tproj"/></svg><span class="pname">Get Power*</span></div>
        </div>
      </div>
      <div class="ptab">Project</div>
      <div class="hsash"></div>
      <div class="ph"><span>Properties</span><span class="ph-btns"><i class="up"></i><b>×</b></span></div>
      <div class="sunk props"><div class="inner gray"></div></div>
    </aside>

    <section class="tree">
      <svg class="guides" viewBox="220 130 238 340">
        <path d="M229 143V458M248 143V330M248 399V410M267 175V186M267 303V314M267 335V346M286 191V282M286 351V378
                 M234 138h6M234 394h6M234 426h6M234 442h6M234 458h6
                 M253 154h5M253 170h5M253 298h5M253 330h5M253 410h5
                 M272 186h6M272 314h6M272 346h6
                 M286 202h11M286 218h11M286 234h11M291 250h6M286 266h11M286 282h11M286 362h11M286 378h11" fill="none" stroke="#8c8c8c" stroke-dasharray="1 1"/>
      </svg>
      <div class="tr l0"><i class="tg minus"></i><svg class="ti"><use href="#tsolid"/></svg><span>Solids</span></div>
      <div class="tr l1"><i class="tg plus"></i><svg class="ti"><use href="#tmat"/></svg><span>aluminum</span></div>
      <div class="tr l1"><i class="tg minus"></i><svg class="ti"><use href="#tmat"/></svg><span>copper</span></div>
      <div class="tr l2"><i class="tg minus"></i><svg class="ti"><use href="#tsolid"/></svg><span>Rectangle1</span></div>
      <div class="tr l3"><i class="tg none"></i><svg class="ti"><use href="#trect"/></svg><span>CreateRectangle</span></div>
      <div class="tr l3"><i class="tg none"></i><svg class="ti"><use href="#tcover"/></svg><span>CoverLines</span></div>
      <div class="tr l3"><i class="tg none"></i><svg class="ti"><use href="#tsweep"/></svg><span>SweepAroundAxis</span></div>
      <div class="tr l3"><i class="tg plus"></i><svg class="ti"><use href="#tsub"/></svg><span>Subtract</span></div>
      <div class="tr l3"><i class="tg none"></i><svg class="ti"><use href="#tmove"/></svg><span>Move</span></div>
      <div class="tr l3"><i class="tg none"></i><svg class="ti"><use href="#tsect"/></svg><span>SectionTo</span></div>
      <div class="tr l1"><i class="tg minus"></i><svg class="ti"><use href="#tmat"/></svg><span>steel_1008</span></div>
      <div class="tr l2"><i class="tg plus"></i><svg class="ti"><use href="#tsolid"/></svg><span>Circle1</span></div>
      <div class="tr l1"><i class="tg minus"></i><svg class="ti"><use href="#tmat"/></svg><span>vacuum</span></div>
      <div class="tr l2"><i class="tg minus"></i><svg class="ti"><use href="#tsolid"/></svg><span>Region</span></div>
      <div class="tr l3"><i class="tg none"></i><svg class="ti"><use href="#tcyl"/></svg><span>CreateCylinder</span></div>
      <div class="tr l3"><i class="tg none"></i><svg class="ti"><use href="#tmove"/></svg><span>Move</span></div>
      <div class="tr l0"><i class="tg minus"></i><svg class="ti"><use href="#tsheet"/></svg><span>Sheets</span></div>
      <div class="tr l1"><i class="tg plus"></i><svg class="ti"><use href="#tsheet"/></svg><span>Rectangle1_Section1_2</span></div>
      <div class="tr l0"><i class="tg plus"></i><svg class="ti"><use href="#tcs"/></svg><span>Coordinate Systems</span></div>
      <div class="tr l0"><i class="tg plus"></i><svg class="ti"><use href="#tplanes"/></svg><span>Planes</span></div>
      <div class="tr l0"><i class="tg plus"></i><svg class="ti"><use href="#tlists"/></svg><span>Lists</span></div>
    </section>

    <section class="view">
      <svg class="fills" viewBox="461 130 902 417" preserveAspectRatio="none">
        <defs>
          <clipPath id="tc"><ellipse cx="852" cy="261" rx="267.600" ry="191.300" transform="rotate(11.400 852 261)"/></clipPath>
        </defs>
        <path d="M587 238L528 547H1074L1117 285z" fill="#d9d9df"/>
        <ellipse cx="797.600" cy="572.800" rx="268" ry="186.800" transform="rotate(10.750 797.600 572.800)" fill="#e2e2ee"/>
        <ellipse cx="852" cy="261" rx="267.600" ry="191.300" transform="rotate(11.400 852 261)" fill="#dfdfe9"/>
        <ellipse clip-path="url(#tc)" cx="797.600" cy="572.800" rx="268" ry="186.800" transform="rotate(10.750 797.600 572.800)" fill="#e9e9f6"/>
      </svg>
      <svg class="scene" viewBox="461 130 902 417" preserveAspectRatio="none">
        <defs>
          <linearGradient id="body" x1="0" x2="1" y1="0" y2="0"><stop offset="0" stop-color="#0d7f8c"/><stop offset=".35" stop-color="#0a9aa4"/><stop offset="1" stop-color="#0aa8ac"/></linearGradient>
        </defs>
        <g class="rings" fill="none">
          <ellipse cx="852" cy="261" rx="267.600" ry="191.300" transform="rotate(11.400 852 261)" stroke="#f0209c" stroke-width="3"/>
          <ellipse cx="851.500" cy="260.500" rx="267.600" ry="191.300" transform="rotate(11.400 852 261)" stroke="#18e838" stroke-width="1"/>
          <ellipse cx="797.600" cy="572.800" rx="268" ry="186.800" transform="rotate(10.750 797.600 572.800)" stroke="#f0209c" stroke-width="3"/>
          <ellipse cx="797.100" cy="572.300" rx="268" ry="186.800" transform="rotate(10.750 797.600 572.800)" stroke="#18e838" stroke-width="1"/>
        </g>
        <path d="M768 358L749 472Q752 496 772 507 800 523 830 522L860 517 882 402z" fill="url(#body)"/>
        <path d="M905 357L905 382 893 445 883 495 873 508 860 517 882 402z" fill="#10a018"/>
        <path d="M882 402L887 402 867 516 860 517z" fill="#0c8a1c"/>
        <ellipse cx="833" cy="365" rx="65" ry="48" fill="#0ce8f2" stroke="#0a909c"/>
        <ellipse cx="833" cy="365" rx="32" ry="24" fill="#0a9ea8" stroke="#0a8a96"/>
        <path d="M863 360L905 357 905 382 894 390 882 402 853 380 862 372z" fill="#10e818" stroke="#0a9020"/>
        <path d="M765 382Q805 385 852 394L882 402" fill="none" stroke="#2828a0" stroke-width="2"/>
        <path d="M755 433Q810 449 870 455" fill="none" stroke="#3848d8" stroke-width="1.600"/>
        <path d="M755 433Q810 449 870 455" fill="none" stroke="#30e040" stroke-width=".7"/>
        <path d="M852 265L830 388" stroke="#a8a018" stroke-width="3"/>
        <path d="M806 526L802 547" stroke="#a8a018" stroke-width="3"/>
        <path d="M852 265L869 160" stroke="#f00000" stroke-width="2"/>
        <path d="M870 153L865 165 875 165z" fill="#c80000" stroke="#c80000"/>
        <text class="zlabel" x="871" y="152">z</text>
        <path d="M776 447L655 516" stroke="#0a780a" stroke-width="1.500"/>
        <path d="M643 521L652 513 659 517 655 520 644 523z" fill="#0a6a0a" stroke="#0a6a0a" stroke-width="2"/>
        <path d="M870 458L932 512" stroke="#0000f0" stroke-width="1.300"/>
        <circle cx="936" cy="515" r="4" fill="#1010d0"/>
        <path d="M946 516h2M950 516h2" stroke="#1010d0" stroke-width="2"/>
      </svg>
      <div class="timebox">Time =-1</div>
      <div class="scale"><i class="sw"></i><i class="sk"></i></div>
      <span class="sl sl0">0</span><span class="sl sl40">40</span><span class="sl sl80">80 (mm)</span>
    </section>
  </main>

  <section class="bottom">
    <div class="vtab"><span class="vb"><b>×</b><i class="lf"></i></span><span class="vt">Message Manager</span></div>
    <div class="msg">
      <svg class="mguides" viewBox="0 0 20 90"><path d="M.5 0V79M.5 21H13M.5 53H13M.5 79H13" fill="none" stroke="#8c8c8c" stroke-dasharray="1 1"/></svg>
      <div class="mlist">
        <div class="mrow m1"><svg class="mi-ic"><use href="#warn"/></svg><p>Currently no mesh operations or data link have been created for the setup(s): Setup1.<br>The initial mesh will be used.  The initial mesh is usually not fine enough to achieve an<br>accurate solution. (11:40:54 <span class="cjk">上午</span>  <span class="cjk">十一月</span> 01, 2015)</p></div>
        <div class="mrow m2"><svg class="mi-ic"><use href="#err"/></svg><p class="sel">Process '3dtds' terminated abnormally.  It may have run out of memory or could have been<br>killed by the user. (11:45:25 <span class="cjk">上午</span>  <span class="cjk">十一月</span> 01, 2015)</p></div>
        <div class="mrow m3"><svg class="mi-ic"><use href="#err"/></svg><p>Simulation completed with execution error on server: Local Machine. (11:45:25 <span class="cjk">上午</span>  <span class="cjk">十一</span><br><span class="cjk">月</span> 01, 2015)</p></div>
      </div>
      <div class="sbar"><i class="sbtn su"></i><i class="strack"></i><i class="sthumb"></i><i class="sbtn sd"></i></div>
    </div>
    <i class="vsash"></i>
    <div class="vtab v2"><span class="vb"><b>×</b><i class="lf"></i></span><span class="vt">Progress</span></div>
    <div class="prog"></div>
  </section>

  <footer class="status">
    <span class="ready">Ready</span>
    <span class="pane p1"></span><span class="pane p2">NUM</span><span class="pane p3"></span>
  </footer>
</div>
</body>
</html>
```

FILE: styles.css
```css
* { box-sizing: border-box; }
html, body { margin: 0; padding: 0; }
body {
  width: 1364px; height: 728px; overflow: hidden;
  background: #d4d0c8; color: #000;
  font: 10px/12px "Liberation Mono", "Noto Sans CJK SC", monospace;
}
i { display: block; font-style: normal; }
.sprite { position: absolute; width: 0; height: 0; }
.app { display: flex; flex-direction: column; height: 728px; }

/* title + menu */
.title { height: 18px; background: #0a246a; color: #fff; display: flex; align-items: center; position: relative; }
.logo { width: 16px; height: 16px; margin: 0 1px 0 3px; flex: none; }
.title-text { font-size: 11.67px; font-weight: 700; white-space: pre; }
.wins { margin-left: auto; display: flex; gap: 1px; padding-right: 2px; }
.wb { width: 16px; height: 14px; background: #d4d0c8; border: 1px solid; border-color: #fff #404040 #404040 #fff; position: relative; font: 10px/12px "DejaVu Sans", sans-serif; color: #000; text-align: center; }
.wb-x { margin-left: 1px; font-weight: 700; }
.w-min { position: absolute; left: 3px; bottom: 2px; width: 6px; height: 2px; background: #000; }
.w-res { position: absolute; left: 5px; top: 1px; width: 7px; height: 6px; border: 1px solid #000; border-top-width: 2px; }
.w-res::after { content: ""; position: absolute; left: -4px; top: 1px; width: 7px; height: 6px; background: #d4d0c8; border: 1px solid #000; border-top-width: 2px; }
.menu { height: 19px; background: #d4d0c8; display: flex; align-items: center; padding-top: 1px; }
.mdi { width: 16px; height: 14px; margin-left: 4px; flex: none; }
.mi { padding: 0 6px; white-space: pre; }

/* toolbars */
.bars-area { height: 91px; background: #dddad5; padding-top: 1px; border-bottom: 1px solid #c8c5be; }
.row { display: flex; height: 30px; padding-left: 2px; padding-bottom: 2px; }
.r2 .s, .r3 .s { width: 8px; }
.g { display: flex; align-items: center; padding: 0 9px 0 1px; margin-right: 2px; border: solid; border-color: #d4d1cb; border-width: 0 1px 1px 0; border-radius: 3px; flex: none; }
.pr4 { padding-right: 4px; }
.pr5 { padding-right: 5px; }
.pr6 { padding-right: 6px; }
.ml-n3 { margin-left: -3px; }
.ml-n2 { margin-left: -2px; }
.ml-n1 { margin-left: -1px; }
.ml2 { margin-left: 2px; }
.ml3 { margin-left: 3px; }
.ml8 { margin-left: 8px; }
.ml-far { margin-left: 295px; }
.grip { width: 3px; height: 18px; margin-right: 4px; flex: none; background: repeating-linear-gradient(#000 0 1px, transparent 1px 2px); }
.b { width: 23px; height: 24px; display: flex; align-items: center; justify-content: center; flex: none; }
.i { width: 18px; height: 18px; shape-rendering: crispEdges; }
.s { width: 7px; height: 22px; flex: none; position: relative; }
.s::after { content: ""; position: absolute; left: 3px; top: 0; bottom: 0; width: 2px; border-left: 1px solid #a8a59e; border-right: 1px solid #f0eeea; }
.r2 .s7 { width: 7px; }
.r1 .s9 { width: 9px; }
.r2 .s10 { width: 10px; }
.r2 .s12 { width: 12px; }
.combo { height: 20px; display: flex; background: #fff; border: 2px solid; border-color: #505050 #e8e8e8 #e8e8e8 #505050; flex: none; }
.cv { flex: 1; line-height: 16px; }
.cb { width: 16px; height: 16px; background: #d4d0c8; border: 1px solid; border-color: #fff #404040 #404040 #fff; position: relative; }
.cb::after { content: ""; position: absolute; left: 3px; top: 5px; border: 4px solid transparent; border-top: 4px solid #000; border-bottom: 0; }
.c-local { width: 246px; margin-left: 2px; }
.c-xy { width: 48px; }
.c-3d { width: 78px; }
.c-mat { width: 98px; }

/* main */
.main { height: 422px; display: flex; background: #d4d0c8; }
.left { width: 215px; margin-right: 5px; border-right: 1px solid #eeece8; flex: none; }
.ph { margin: 1px 0 0 3px; width: 207px; height: 14px; border: 1px solid #808080; border-radius: 2px; display: flex; justify-content: space-between; align-items: center; font: 10.5px/12px "Liberation Sans", sans-serif; padding: 0 3px 0 3px; }
.ph-btns { display: flex; align-items: center; gap: 7px; padding-right: 1px; }
.ph-btns b { font: 700 11px/10px "Liberation Sans", sans-serif; }
.up { border: 3px solid transparent; border-bottom: 3px solid #000; border-top: 0; }
.sunk { margin: 4px 0 0 8px; width: 198px; border: 2px solid; border-color: #fff #606060 #606060 #fff; padding: 3px 1px 1px 3px; }
.pm { height: 158px; }
.props { height: 183px; margin-top: 5px; border-bottom: 0; }
.inner { height: 100%; background: #fff; border: 2px solid; border-color: #505050 #ececec #ececec #505050; }
.inner.gray { background: #d4d0c8; border-color: #a8a59e #ececec #ececec #a8a59e; }
.proj { display: flex; align-items: center; padding: 0 0 0 3px; height: 18px; margin-top: 1px; }
.proj .tg { margin-right: 0; }
.dots { width: 6px; border-top: 1px dotted #8c8c8c; }
.pi { width: 18px; height: 17px; margin-right: 1px; flex: none; }
.pname { background: #d4d0c8; font-weight: 700; font-size: 11px; line-height: 18px; padding: 0 4px 0 2px; width: 74px; white-space: pre; }
.ptab { margin-left: 9px; width: 57px; height: 17px; padding-left: 7px; line-height: 17px; border: solid #404040; border-width: 0 1px 1px 0; border-radius: 0 0 2px 2px; margin-bottom: 11px; }
.hsash { height: 4px; margin-bottom: 2px; border-top: 1px solid #fff; border-bottom: 2px solid #303030; }
.tree { width: 238px; background: #fff; border-top: 1px solid #000; margin: 1px 2px 2px 0; padding-top: 1px; position: relative; flex: none; }
.guides { position: absolute; left: 0; top: 0; width: 238px; height: 340px; }
.tr { height: 16px; display: flex; align-items: center; white-space: pre; position: relative; }
.tr span { padding-top: 1px; }
.l0 { padding-left: 5px; }
.l1 { padding-left: 24px; }
.l2 { padding-left: 43px; }
.l3 { padding-left: 62px; }
.tg { width: 9px; height: 9px; margin-right: 6px; flex: none; position: relative; background: #fff; border: 1px solid #808080; }
.tg.none { border: 0; background: none; }
.tg.plus::before, .tg.minus::before { content: ""; position: absolute; left: 1px; top: 3px; width: 5px; height: 1px; background: #000; }
.tg.plus::after { content: ""; position: absolute; left: 3px; top: 1px; width: 1px; height: 5px; background: #000; }
.ti { width: 16px; height: 16px; margin-right: 4px; flex: none; background: #fff; overflow: visible; shape-rendering: crispEdges; }
.l1 .ti { width: 17px; }
.view {
  flex: 1; position: relative; margin: 1px 0 2px 0;
  border-top: 1px solid #000; border-left: 1px solid #000; border-right: 1px solid #c8c5be; overflow: hidden;
  background-color: #fff;
  background-image:
    repeating-linear-gradient(35.8deg, #dcdcdc 0 2px, transparent 2px 95px),
    repeating-linear-gradient(152deg, #dcdcdc 0 2px, transparent 2px 95px),
    repeating-linear-gradient(35.8deg, #e8e8e8 0 1px, transparent 1px 19px),
    repeating-linear-gradient(152deg, #e8e8e8 0 1px, transparent 1px 19px);
}
.fills, .scene { position: absolute; left: 0; top: 0; width: 100%; height: 100%; }
.fills { mix-blend-mode: multiply; }
.rings { shape-rendering: crispEdges; }
.zlabel { font: 14px "Liberation Sans", sans-serif; fill: #e00000; }
.timebox { position: absolute; left: 5px; top: 389px; width: 63px; height: 21px; background: #fff; border: 2px solid #000; border-radius: 2px; font: 12.5px/17px "Liberation Sans", sans-serif; padding-left: 5px; box-shadow: 0 2px 0 #c8c8c8; white-space: pre; }
.scale { position: absolute; left: 269px; top: 386px; width: 362px; height: 10px; display: flex; border: 1px solid #000; border-radius: 1px; }
.sw { width: 181px; background: #fff; }
.sk { flex: 1; background: #141414; }
.sl { position: absolute; top: 400px; font: 12px/14px "Liberation Sans", sans-serif; color: #303030; white-space: pre; }
.sl0 { left: 266px; }
.sl40 { left: 442px; }
.sl80 { left: 624px; }

/* bottom */
.bottom { height: 153px; display: flex; border-top: 2px solid #303030; border-bottom: 1px solid #808080; background: #d4d0c8; padding: 2px 0 4px 3px; }
.vtab { width: 13px; height: 146px; border: 1px solid #808080; border-radius: 2px; display: flex; flex-direction: column; justify-content: space-between; align-items: center; flex: none; }
.vb { display: flex; flex-direction: column; align-items: center; padding-top: 1px; }
.vb b { font: 700 11px/11px "Liberation Sans", sans-serif; }
.lf { margin-top: 5px; border: 3px solid transparent; border-right: 3px solid #000; border-left: 0; }
.vt { writing-mode: vertical-rl; transform: rotate(180deg); font: 10px/11px "Liberation Sans", sans-serif; padding-top: 3px; white-space: pre; }
.msg { width: 660px; height: 144px; margin: 1px 0 0 2px; background: #fff; border: 2px solid; border-color: #505050 #ececec #ececec #505050; position: relative; flex: none; overflow: hidden; }
.mguides { position: absolute; left: 48px; top: 0; width: 20px; height: 90px; }
.mrow { display: flex; padding-left: 76px; position: relative; }
.mrow p { margin: 0; white-space: pre; padding-left: 1px; }
.mi-ic { width: 16px; height: 16px; margin-right: 4px; flex: none; align-self: center; background: #fff; shape-rendering: crispEdges; }
.m1 { height: 38px; padding-top: 2px; }
.m2 { height: 26px; }
.m3 { height: 24px; padding-top: 2px; }
.m3 .mi-ic { margin-top: 4px; align-self: flex-start; }
.sel { background: #0a246a; color: #fff; width: 538px; height: 26px; border: 1px dotted #e8d890; padding-top: 1px; }
.cjk { font-size: 12px; line-height: 0; }
.sbar { position: absolute; left: 640px; top: 1px; width: 16px; bottom: 0; display: flex; flex-direction: column; }
.sbtn { height: 15px; flex: none; background: #d4d0c8; border: 1px solid; border-color: #fff #404040 #404040 #fff; position: relative; }
.sbtn::after { content: ""; position: absolute; left: 3px; top: 4px; border: 4px solid transparent; }
.su::after { border-bottom: 4px solid #000; border-top: 0; }
.sd::after { border-top: 4px solid #000; border-bottom: 0; }
.strack { height: 57px; flex: none; background: conic-gradient(#fff 25%, #d4d0c8 0 50%, #fff 0 75%, #d4d0c8 0) 0 0/2px 2px; }
.sthumb { flex: 1; background: #d4d0c8; border: 1px solid; border-color: #fff #404040 #404040 #fff; }
.vsash { width: 2px; margin: -2px 3px 0 6px; height: 152px; background: #404040; box-shadow: 1px 0 0 #fff, -1px 0 0 #fff; flex: none; }
.prog { width: 656px; height: 144px; margin: 1px 0 0 1px; background: #fff; border: 2px solid; border-color: #505050 #ececec #ececec #505050; flex: none; }

/* status */
.status { flex: 1; display: flex; align-items: center; background: #d4d0c8; padding: 2px 1px 0 2px; border-bottom: 2px solid #eeece8; }
.ready { margin-right: auto; }
.pane { height: 16px; border: 1px solid; border-color: #808080 #fff #fff #808080; margin-left: 2px; text-align: center; line-height: 14px; }
.p1, .p2 { width: 24px; }
.p3 { width: 29px; }
```
